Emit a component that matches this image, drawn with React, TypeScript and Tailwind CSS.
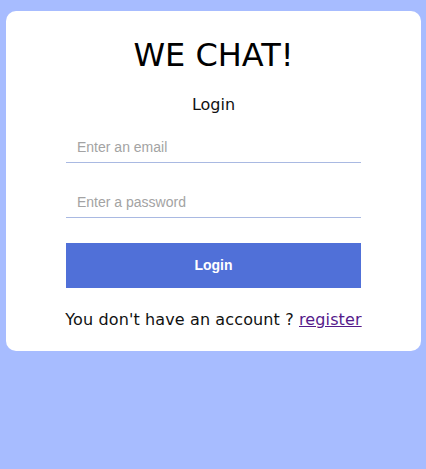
export default function App() {
  return (
    <div className="h-[469px] w-[426px] bg-[#a7bcff] pt-[11px] pl-[6px]">
      <div
        className="w-[415px] rounded-[10px] bg-white pt-[26px] pb-[22px] flex flex-col items-center"
        style={{ fontFamily: '"DejaVu Sans", sans-serif' }}
      >
        <h1 className="text-[32px] leading-[37px] text-black">WE CHAT!</h1>
        <p className="mt-[21px] text-[16px] leading-[19px] text-[#111]">Login</p>
        <form
          className="mt-[17px] w-[295px] flex flex-col"
          onSubmit={(e) => e.preventDefault()}
          style={{ fontFamily: '"Liberation Sans", Arial, sans-serif' }}
        >
          <input
            type="email"
            placeholder="Enter an email"
            className="h-[32px] px-[11px] text-[14px] border-0 border-b border-b-[#a9b9e2] outline-none placeholder:text-[#a3a3a3]"
          />
          <input
            type="password"
            placeholder="Enter a password"
            className="mt-[23px] h-[32px] px-[11px] text-[14px] border-0 border-b border-b-[#a9b9e2] outline-none placeholder:text-[#a3a3a3]"
          />
          <button
            type="submit"
            className="mt-[25px] h-[45px] bg-[#5070d8] text-white text-[14px] font-bold"
          >
            Login
          </button>
        </form>
        <p className="mt-[22px] text-[16px] leading-[19px] tracking-[0.12px] text-[#111]">
          You don't have an account ?{" "}
          <a href="#register" className="text-[#551a8b] underline">
            register
          </a>
        </p>
      </div>
    </div>
  );
}
